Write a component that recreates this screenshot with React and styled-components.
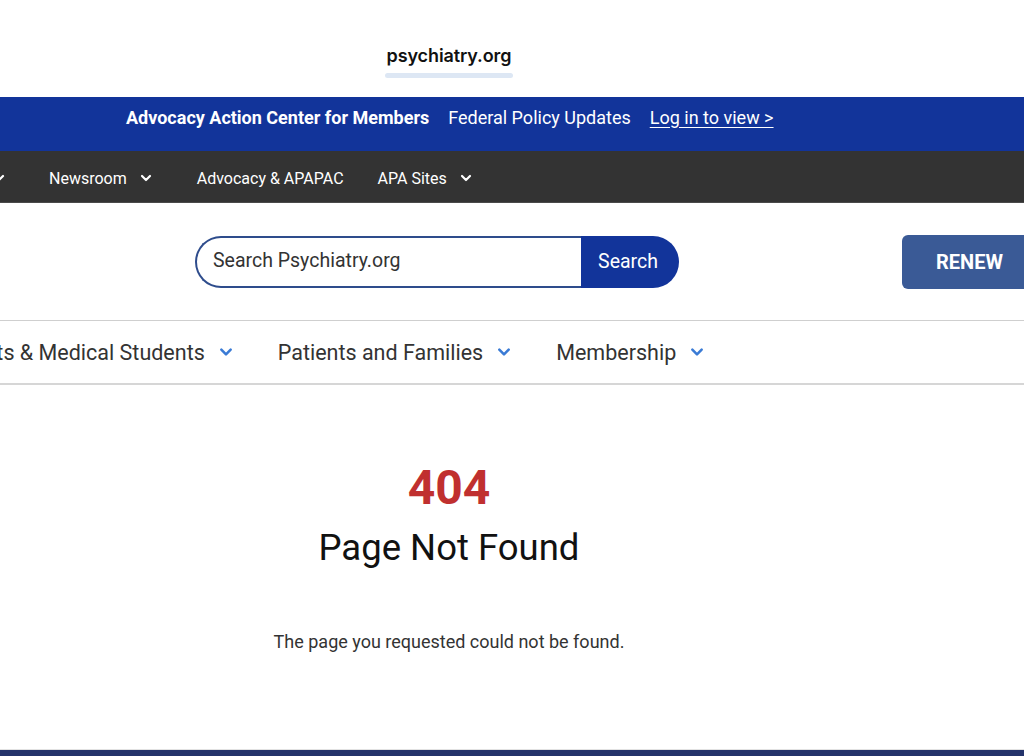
import React from "react";
import styled, { createGlobalStyle } from "styled-components";

const GlobalStyle = createGlobalStyle`
  * {
    box-sizing: border-box;
    margin: 0;
    padding: 0;
  }
  body {
    background: #fff;
    font-family: Roboto, "Liberation Sans", sans-serif;
    overflow: hidden;
    width: 1024px;
    height: 756px;
  }
`;

const Page = styled.div`
  width: 1024px;
  height: 756px;
  display: flex;
  flex-direction: column;
  overflow: hidden;
`;

const UrlBar = styled.div`
  height: 97px;
  display: flex;
  flex-direction: column;
  align-items: center;
  justify-content: flex-end;
  padding: 0 126px 19px 0;
  gap: 7px;
`;

const UrlText = styled.span`
  font-family: Inter, "Noto Sans", sans-serif;
  font-weight: 600;
  font-size: 18px;
  color: #111;
  letter-spacing: -0.1px;
`;

const Progress = styled.div`
  width: 128px;
  height: 5px;
  border-radius: 3px;
  background: #dde7f4;
`;

const AdvocacyBar = styled.div`
  height: 54px;
  background: #12349a;
  display: flex;
  align-items: center;
  padding: 0 0 14px 126px;
  gap: 19px;
  color: #fff;
  font-size: 18px;
`;

const AdvLink = styled.a`
  color: #fff;
  font-weight: ${(p) => (p.$bold ? 700 : 400)};
  text-decoration: ${(p) => (p.$underline ? "underline" : "none")};
  text-underline-offset: 3px;
`;

const SiteNav = styled.div`
  height: 52px;
  background: #333333;
  display: flex;
  align-items: center;
  padding-top: 3px;
  color: #fff;
  font-size: 16px;
  border-bottom: 1px solid #4a4a4a;
`;

const SiteItem = styled.span`
  display: flex;
  align-items: center;
  gap: 13px;
  margin-left: ${(p) => p.$ml}px;
`;

const SearchRow = styled.div`
  height: 117px;
  display: flex;
  align-items: center;
  padding-left: 195px;
`;

const SearchForm = styled.form`
  display: flex;
  width: 484px;
  height: 52px;
`;

const SearchInput = styled.div`
  flex: 1;
  border: 2px solid #2e4c8c;
  border-right: none;
  border-radius: 26px 0 0 26px;
  display: flex;
  align-items: center;
  padding: 0 0 2px 16px;
  font-size: 19.5px;
  color: #333;
`;

const SearchButton = styled.button`
  width: 98px;
  border: none;
  background: #12349a;
  color: #fff;
  font-family: Roboto, sans-serif;
  font-size: 19.5px;
  border-radius: 0 26px 26px 0;
  padding-right: 4px;
`;

const RenewButton = styled.button`
  margin-left: auto;
  margin-right: -40px;
  width: 162px;
  height: 54px;
  border: none;
  border-radius: 6px;
  background: #3a5a96;
  color: #fff;
  font-family: Roboto, sans-serif;
  font-weight: 700;
  font-size: 20px;
  text-align: left;
  padding-left: 34px;
`;

const MainNav = styled.div`
  height: 65px;
  border-top: 1px solid #cfcfcf;
  border-bottom: 2px solid #d6d6d6;
  display: flex;
  align-items: center;
  gap: 45px;
  font-size: 21.5px;
  color: #333;
`;

const MainItem = styled.span`
  display: flex;
  align-items: center;
  gap: 14px;
  white-space: nowrap;
  margin-left: ${(p) => p.$ml || 0}px;
`;

const Content = styled.main`
  flex: 1;
  display: flex;
  flex-direction: column;
  align-items: center;
  padding: 79px 126px 0 0;
`;

const ErrorCode = styled.h1`
  color: #c0302f;
  font-size: 48px;
  font-weight: 700;
  line-height: 1;
`;

const ErrorTitle = styled.h2`
  color: #111;
  font-size: 36.5px;
  font-weight: 400;
  margin-top: 14px;
`;

const ErrorText = styled.p`
  color: #333;
  font-size: 18px;
  margin-top: 62px;
`;

const Footer = styled.footer`
  height: 7px;
  background: #24336b;
  border-top: 1px solid #e2e2e2;
`;

const Chevron = ({ color = "#fff", size = 12 }) => (
  <svg width={size} height={size} viewBox="0 0 12 12" fill="none">
    <path
      d="M2 4l4 4 4-4"
      stroke={color}
      strokeWidth="2.2"
      strokeLinecap="round"
      strokeLinejoin="round"
    />
  </svg>
);

export default function App() {
  return (
    <Page>
      <GlobalStyle />
      <UrlBar>
        <UrlText>psychiatry.org</UrlText>
        <Progress />
      </UrlBar>
      <AdvocacyBar>
        <AdvLink $bold>Advocacy Action Center for Members</AdvLink>
        <AdvLink>Federal Policy Updates</AdvLink>
        <AdvLink $underline>Log in to view &gt;</AdvLink>
      </AdvocacyBar>
      <SiteNav>
        <SiteItem $ml={-7}>
          <Chevron />
        </SiteItem>
        <SiteItem $ml={44}>
          Newsroom <Chevron />
        </SiteItem>
        <SiteItem $ml={45}>Advocacy &amp; APAPAC</SiteItem>
        <SiteItem $ml={34}>
          APA Sites <Chevron />
        </SiteItem>
      </SiteNav>
      <SearchRow>
        <SearchForm onSubmit={(e) => e.preventDefault()}>
          <SearchInput>Search Psychiatry.org</SearchInput>
          <SearchButton type="submit">Search</SearchButton>
        </SearchForm>
        <RenewButton>RENEW</RenewButton>
      </SearchRow>
      <MainNav>
        <MainItem $ml={-80}>
          Residents &amp; Medical Students <Chevron color="#3a7bd5" size={14} />
        </MainItem>
        <MainItem>
          Patients and Families <Chevron color="#3a7bd5" size={14} />
        </MainItem>
        <MainItem>
          Membership <Chevron color="#3a7bd5" size={14} />
        </MainItem>
      </MainNav>
      <Content>
        <ErrorCode>404</ErrorCode>
        <ErrorTitle>Page Not Found</ErrorTitle>
        <ErrorText>The page you requested could not be found.</ErrorText>
      </Content>
      <Footer />
    </Page>
  );
}
